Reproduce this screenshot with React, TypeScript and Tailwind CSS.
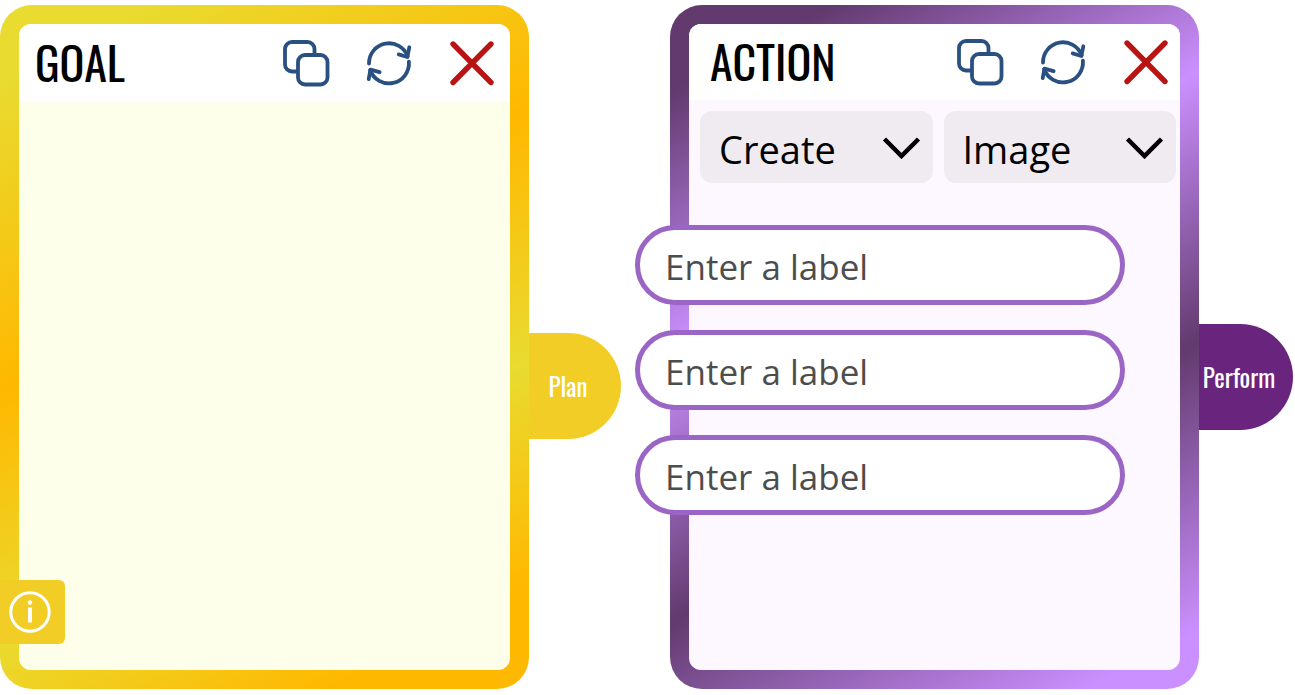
import type { ReactNode } from "react";

const headingFont = "font-['Oswald','Liberation_Sans_Narrow',sans-serif]";

function CopyIcon() {
  return (
    <svg viewBox="0 0 48 48" className="size-12" fill="none" stroke="#2a5082" strokeWidth="3.8" strokeLinecap="round">
      <path d="M14 32.5H10a7 7 0 0 1-7-7V10a7 7 0 0 1 7-7h15.500a7 7 0 0 1 7 7v4" />
      <rect x="16" y="16" width="29.500" height="29.500" rx="7" />
    </svg>
  );
}

function RefreshIcon() {
  return (
    <svg
      viewBox="0 0 48 48"
      className="size-12"
      fill="none"
      stroke="#2a5082"
      strokeWidth="3.8"
      strokeLinecap="round"
      strokeLinejoin="round"
    >
      <path d="M4 24.500A20 20 0 0 1 42.700 17.200" />
      <path d="M44.300 8.300 42.300 18 33.700 15.400" />
      <path d="M43.900 22.700A20 20 0 0 1 5.100 31" />
      <path d="M3.700 40.200 5.500 30.700 14.600 33.200" />
    </svg>
  );
}

function CloseIcon() {
  return (
    <svg viewBox="0 0 48 48" className="size-12" fill="none" stroke="#b91414" strokeWidth="5.4" strokeLinecap="round">
      <path d="M5 5 43 43.500M43 5 5 43.500" />
    </svg>
  );
}

function Card({
  title,
  frame,
  header,
  body,
  children,
}: {
  title: string;
  frame: string;
  header: string;
  body: string;
  children?: ReactNode;
}) {
  return (
    <section className={`relative flex min-w-0 flex-1 rounded-[32px] p-[19px] ${frame}`}>
      <div className={`min-w-0 flex-1 rounded-xl ${body}`}>
        <header className={`flex items-center justify-between rounded-t-xl bg-white ${header}`}>
          <h2 className={`${headingFont} pb-1 text-[46px] leading-none font-normal text-black`}>{title}</h2>
          <div className="flex gap-[35px]">
            <button type="button" aria-label={`Duplicate ${title}`}>
              <CopyIcon />
            </button>
            <button type="button" aria-label={`Reset ${title}`}>
              <RefreshIcon />
            </button>
            <button type="button" aria-label={`Remove ${title}`}>
              <CloseIcon />
            </button>
          </div>
        </header>
        {children}
      </div>
    </section>
  );
}

function Picker({ label, options }: { label: string; options: string[] }) {
  return (
    <div className="relative min-w-0 flex-1">
      <select
        aria-label={label}
        className="h-[72px] w-full appearance-none rounded-xl bg-[#efebf1] pt-1 pl-[19px] font-['Open_Sans',sans-serif] text-[38px] text-black"
      >
        {options.map((option) => (
          <option key={option}>{option}</option>
        ))}
      </select>
      <svg
        viewBox="0 0 40 24"
        className="pointer-events-none absolute top-6 right-3 h-6 w-10"
        fill="none"
        stroke="#000"
        strokeWidth="4.5"
      >
        <path d="M3.500 4 20.500 21 37.500 4" />
      </svg>
    </div>
  );
}

function Tab({ text, look }: { text: string; look: string }) {
  return (
    <button
      type="button"
      className={`h-[106px] shrink-0 self-center rounded-r-[53px] text-[25px] font-normal text-white ${headingFont} ${look}`}
    >
      {text}
    </button>
  );
}

export default function App() {
  return (
    <main className="flex min-h-screen bg-white pt-[5px] pr-0.5 pb-1.5">
      <Card
        title="GOAL"
        frame="bg-[linear-gradient(152deg,#e9db30_8%,#ffb800_40%,#e9db30_66%,#ffb800_89%)]"
        header="h-[77px] pr-3.5 pl-4"
        body="bg-[#feffeb]"
      >
        <button
          type="button"
          aria-label="Information"
          className="absolute bottom-[45px] left-0 flex h-16 w-[65px] items-center rounded-r-md bg-[#f2cd25] pl-2"
        >
          <svg viewBox="0 0 44 44" className="size-11" fill="none" stroke="#fff">
            <circle cx="22" cy="22" r="19.200" strokeWidth="3" />
            <circle cx="22" cy="12.500" r="2.200" fill="#fff" stroke="none" />
            <path d="M22 17.500V32.500" strokeWidth="4" />
          </svg>
        </button>
      </Card>
      <Tab text="Plan" look="mt-[78px] mr-[49px] w-[92px] bg-[#f2cd25] pr-3.5" />

      <Card
        title="ACTION"
        frame="bg-[linear-gradient(152deg,#623a6e_9%,#cb90ff_36%,#623a6e_64%,#cb90ff_94%)]"
        header="h-[76px] pr-2.5 pl-[21px]"
        body="bg-[#fdf8ff]"
      >
        <div className="flex gap-[11px] pt-[11px] pr-1 pl-[11px]">
          <Picker label="Action" options={["Create", "Edit"]} />
          <Picker label="Medium" options={["Image", "Text"]} />
        </div>
        <div className="relative mr-[55px] -ml-[54px] flex flex-col gap-[25px] pt-[42px]">
          {[1, 2, 3].map((n) => (
            <input
              key={n}
              type="text"
              aria-label={`Label ${n}`}
              placeholder="Enter a label"
              className="h-20 w-full rounded-full border-[5px] border-[#9b65c6] bg-white px-[25px] pt-0.5 font-['Open_Sans',sans-serif] text-[35px] text-black placeholder:text-[#4d4d4d]"
            />
          ))}
        </div>
      </Card>
      <Tab text="Perform" look="mt-[60px] w-[94px] bg-[#69247e] pr-3.5" />
    </main>
  );
}
